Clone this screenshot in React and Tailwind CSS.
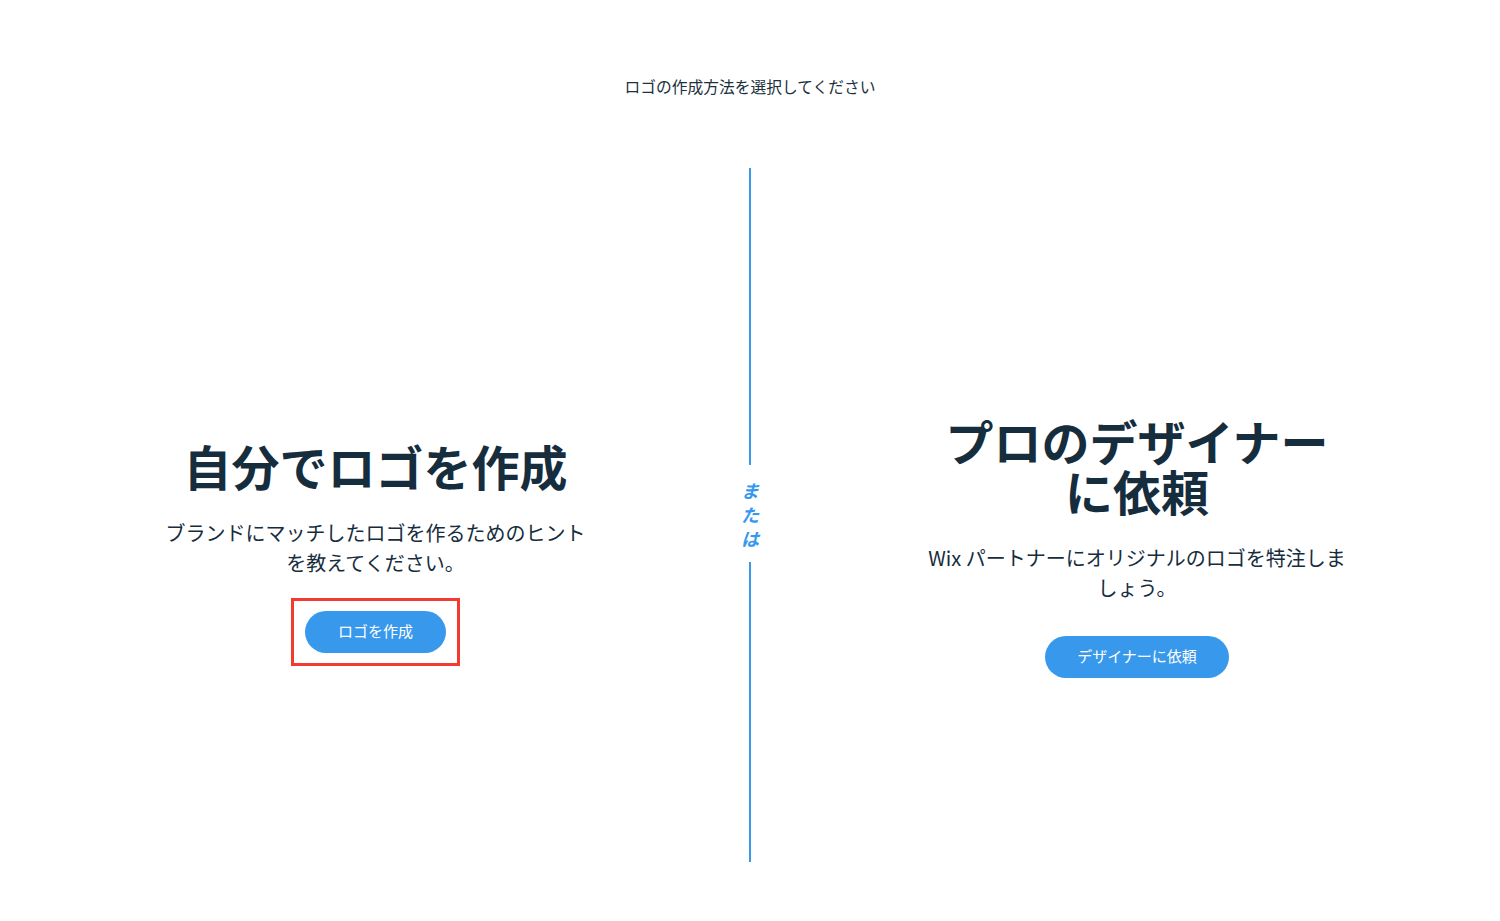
import React from 'react';

const jp = { fontFamily: '"Noto Sans CJK JP", "Noto Sans", sans-serif' };

function Option({ title, text, button, marked, className }) {
  return (
    <div className={`flex flex-1 items-center justify-center pt-[62px] ${className}`}>
      <div className="flex w-[430px] flex-col items-center text-center text-[#162d3d]">
        <h2 className="text-[48px] font-bold leading-[50px]">{title}</h2>
        <p className="mt-[28px] text-[20px] leading-[30px]">{text}</p>
        <div className="relative mt-[33px]">
          <button className="h-[42px] rounded-full bg-[#3899ec] px-[32.5px] text-[15px] text-white">
            {button}
          </button>
          {marked && (
            <div className="pointer-events-none absolute -inset-x-[14px] -inset-y-[13px] border-[3px] border-[#f23a30]" />
          )}
        </div>
      </div>
    </div>
  );
}

export default function App() {
  return (
    <div className="flex h-[921px] flex-col bg-white" style={jp}>
      <div className="pt-[76px] text-center text-[15.75px] leading-[22px] text-[#20303c]">
        ロゴの作成方法を選択してください
      </div>

      <div className="mt-[70px] flex h-[694px]">
        <Option
          className="w-[749px] flex-none pl-[2px]"
          title="自分でロゴを作成"
          text="ブランドにマッチしたロゴを作るためのヒントを教えてください。"
          button="ロゴを作成"
          marked
        />

        <div className="flex w-[2px] flex-col items-center">
          <div className="h-[297px] w-[2px] bg-[#3899ec]" />
          <div className="flex h-[97px] flex-col items-center justify-center text-[18px] font-bold italic leading-[24px] text-[#3899ec]">
            <span>ま</span>
            <span>た</span>
            <span>は</span>
          </div>
          <div className="h-[300px] w-[2px] bg-[#3899ec]" />
        </div>

        <Option
          className="pl-[23px]"
          title="プロのデザイナーに依頼"
          text="Wix パートナーにオリジナルのロゴを特注しましょう。"
          button="デザイナーに依頼"
        />
      </div>
    </div>
  );
}
